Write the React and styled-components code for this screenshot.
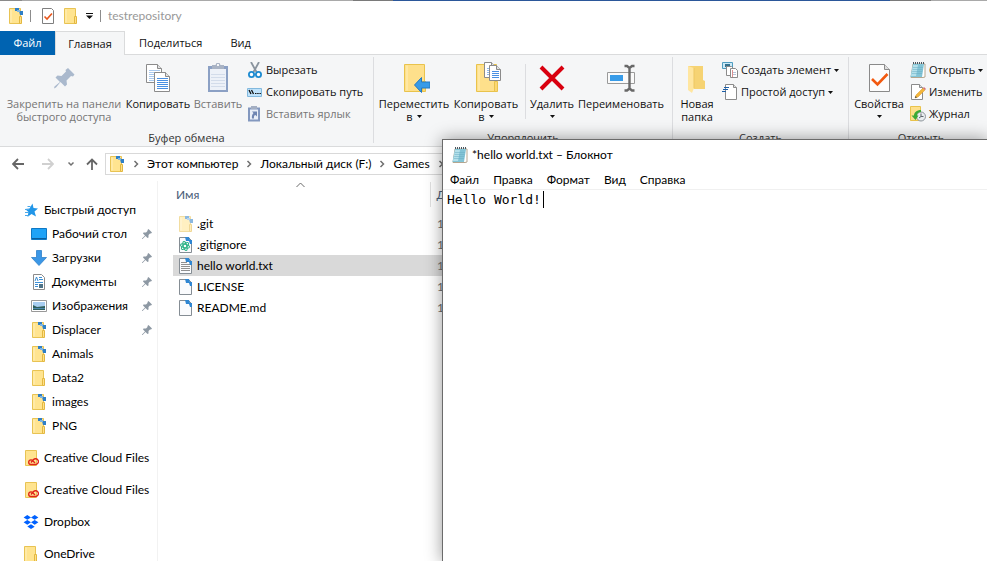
import React from 'react';
import styled, { createGlobalStyle, css } from 'styled-components';

const GlobalStyle = createGlobalStyle`
  * { box-sizing: border-box; }
  html, body, #root { height: 100%; }
  body {
    margin: 0;
    overflow: hidden;
    background: #fff;
    color: #000;
    font: 12px/16px Lato, "Noto Sans", sans-serif;
  }
  button {
    border: 0;
    padding: 0;
    background: none;
    color: inherit;
    font: inherit;
  }
  svg { display: block; flex: none; }
`;

const ribbonFont = css`
  font: 11px/16px "Open Sans", "Noto Sans", sans-serif;
`;

/* ---------- layout ---------- */

const Desktop = styled.div`
  position: relative;
  display: flex;
  flex-direction: column;
  min-height: 100vh;
  overflow: hidden;
`;

const TopEdge = styled.div`
  height: 1px;
  background: linear-gradient(
    90deg,
    #8a8a8a 0 2.2%, #a9a9a9 2.2% 35.8%, #7a7a7a 35.8% 39.8%,
    #2b579a 39.8% 90.2%, #7a7a7a 90.2% 94.3%, #a9a9a9 94.3%
  );
`;

const TitleBar = styled.header`
  display: flex;
  align-items: center;
  height: 30px;
  padding-left: 8px;
  color: #999;
`;

const TitleRule = styled.span`
  width: 1px;
  height: 12px;
  margin: ${(p) => p.$margin};
  background: #8c8c8c;
`;

const QuickButton = styled.button`
  display: grid;
  place-items: center;
  width: 16px;
  height: 18px;
  margin-right: ${(p) => p.$after || 0}px;
`;

const TabStrip = styled.nav`
  display: flex;
  height: 24px;
  border-bottom: 1px solid #dadbdc;
  ${ribbonFont}
`;

const Tab = styled.button`
  height: 24px;
  padding: 0 14px;
  color: #111;
  ${(p) => p.$kind === 'file' && css`
    width: 55px;
    padding: 0;
    background: #0063b1;
    color: #fff;
  `}
  ${(p) => p.$kind === 'active' && css`
    width: 70px;
    padding: 0;
    border: 1px solid #dadbdc;
    border-bottom: 0;
    background: #f5f6f7;
  `}
`;

const Ribbon = styled.section`
  display: flex;
  height: 92px;
  border-bottom: 1px solid #dadbdc;
  background: #f5f6f7;
  color: #111;
  ${ribbonFont}
`;

const Group = styled.div`
  display: flex;
  flex-direction: column;
  flex: 0 0 ${(p) => p.$width}px;
  min-width: 0;
  padding-top: 2px;
`;

const GroupBody = styled.div`
  display: flex;
  height: 73px;
  padding-left: ${(p) => p.$pad}px;
`;

const GroupLabel = styled.div`
  text-align: center;
  line-height: 16px;
  color: #333;
`;

const GroupRule = styled.span`
  flex: none;
  width: 1px;
  height: 86px;
  margin-top: 2px;
  background: #dcdde0;
`;

const InnerRule = styled.span`
  flex: none;
  width: 1px;
  height: 55px;
  margin: 7px 2px 0 4px;
  background: #dcdde0;
`;

const BigButton = styled.button`
  display: flex;
  flex-direction: column;
  align-items: center;
  flex: 0 0 ${(p) => p.$width}px;
  min-width: 0;
  padding-top: 5px;
  line-height: 13px;
  white-space: nowrap;
  color: ${(p) => (p.disabled ? '#757575' : 'inherit')};
`;

const BigLabel = styled.span`
  display: block;
  margin-top: 3px;
`;

const MenuLine = styled.span`
  display: flex;
  align-items: center;
  justify-content: center;
  gap: 4px;
  height: 13px;
`;

const SmallColumn = styled.div`
  display: flex;
  flex-direction: column;
  margin-left: ${(p) => p.$gap}px;
  padding-top: 2px;
`;

const SmallButton = styled.button`
  display: flex;
  align-items: center;
  gap: 3px;
  height: 22px;
  white-space: nowrap;
  color: ${(p) => (p.disabled ? '#757575' : 'inherit')};
`;

const NavBar = styled.nav`
  display: flex;
  align-items: center;
  height: 34px;
  padding-left: 10px;
`;

const NavButton = styled.button`
  display: grid;
  place-items: center;
  width: 16px;
  height: 22px;
  margin-right: ${(p) => p.$after}px;
`;

const AddressBox = styled.div`
  display: flex;
  flex: 1;
  align-items: center;
  height: 22px;
  padding-left: 3px;
  border: 1px solid #d9d9d9;
`;

const Crumb = styled.a`
  color: #000;
  text-decoration: none;
  white-space: nowrap;
`;

const CrumbArrow = styled.span`
  display: grid;
  place-items: center;
  width: 22px;
`;

const Content = styled.div`
  display: flex;
  flex: 1;
`;

const Sidebar = styled.aside`
  flex: 0 0 158px;
  height: 380px;
  padding-top: 17px;
  overflow: hidden;
  border-right: 1px solid #f2f2f2;
`;

const SideItem = styled.a`
  display: flex;
  align-items: center;
  height: 24px;
  margin-top: ${(p) => (p.$spaced ? 8 : 0)}px;
  padding: 0 4px 0 ${(p) => (p.$nested ? 31 : 23)}px;
  gap: 5px;
  color: #000;
  text-decoration: none;
  white-space: nowrap;
`;

const SideText = styled.span`
  flex: 1;
`;

const FilePane = styled.main`
  flex: 1;
  padding: 1px 0 0 15px;
`;

const FileTable = styled.table`
  width: 100%;
  border-collapse: collapse;
  table-layout: fixed;
`;

const HeadCell = styled.th`
  position: relative;
  width: ${(p) => p.$width || 'auto'};
  height: 25px;
  padding: 0 3px 0 ${(p) => p.$pad}px;
  border-right: ${(p) => (p.$width ? '1px solid #e0e0e0' : '0')};
  color: #4c607a;
  font-weight: 400;
  text-align: left;
`;

const SortMark = styled.span`
  position: absolute;
  top: 0;
  left: 50%;
  margin-left: -5px;
`;

const FileRows = styled.tbody`
  &::before {
    content: "";
    display: block;
    height: 6px;
  }
`;

const FileRow = styled.tr`
  height: 21px;
  background: ${(p) => (p.$selected ? '#d9d9d9' : 'transparent')};
`;

const FileCell = styled.td`
  height: 21px;
  padding: 0 0 0 ${(p) => p.$pad}px;
  color: ${(p) => (p.$muted ? '#6d6d6d' : '#000')};
`;

const FileName = styled.div`
  display: flex;
  align-items: center;
  gap: 3px;
  height: 21px;
`;

/* ---------- Notepad window ---------- */

const NotepadWindow = styled.section`
  position: absolute;
  top: 139px;
  left: 442px;
  right: -1px;
  bottom: -1px;
  display: flex;
  flex-direction: column;
  border: 1px solid #6b6b6b;
  background: #fff;
  box-shadow: 0 0 16px rgba(0, 0, 0, 0.4);
`;

const NotepadTitle = styled.header`
  display: flex;
  align-items: center;
  gap: 4px;
  height: 30px;
  padding-left: 9px;
`;

const NotepadMenu = styled.nav`
  display: flex;
  align-items: center;
  gap: 14px;
  height: 20px;
  padding-left: 7px;
  border-bottom: 1px solid #f0f0f0;
`;

const Editor = styled.div`
  display: grid;
  flex: 1;
  padding: 1px 0 0 4px;
  font: 13px/17px "DejaVu Sans Mono", monospace;
  & > * { grid-area: 1 / 1; }
`;

const EditorText = styled.textarea`
  border: 0;
  padding: 0;
  outline: 0;
  resize: none;
  overflow: hidden;
  background: none;
  color: #000;
  font: inherit;
`;

const Caret = styled.span`
  width: 1px;
  height: 17px;
  margin-left: calc(12ch + 2px);
  background: #000;
`;

/* ---------- icons ---------- */

const Svg = ({ s = 16, w, h, children, ...rest }) => (
  <svg width={w || s} height={h || s} viewBox={`0 0 ${w || s} ${h || s}`} aria-hidden="true" {...rest}>
    {children}
  </svg>
);

const SyncMarks = () => (
  <g>
    <path d="M7 0h4v3h-4zM11 3h4v4h-3z" fill="#2f7fc6" />
    <path d="M9 2h3v2h-3z" fill="#7db4e2" />
  </g>
);

const FolderIcon = ({ sync, faded }) => (
  <Svg opacity={faded ? 0.55 : 1}>
    <path d="M1.500.5h11v15h-11z" fill="#ffe490" stroke="#e8c353" />
    <path d="M3 1.500v13" stroke="#fff0bd" />
    <path d="M11.500 8.500h2v7h-2z" fill="#ffe08a" stroke="#e3b840" />
    {sync && <SyncMarks />}
  </Svg>
);

const SheetIcon = ({ kind }) => (
  <Svg>
    <path d="M1.500.5h9l3 3v12h-12z" fill="#fafbfd" stroke="#858d94" />
    {kind === 'text' && <path d="M3 4.500h6M3 6.500h9M3 8.500h9M3 10.500h9M3 12.500h9" stroke="#909090" />}
    {kind === 'atom' && (
      <g fill="none" stroke="#27b184" strokeWidth="1">
        <ellipse cx="7" cy="9" rx="4.600" ry="1.800" transform="rotate(15 7 9)" />
        <ellipse cx="7" cy="9" rx="4.600" ry="1.800" transform="rotate(75 7 9)" />
        <ellipse cx="7" cy="9" rx="4.600" ry="1.800" transform="rotate(135 7 9)" />
      </g>
    )}
    <path d="M7 0h4l1 3h2v4h-2l-1-3h-3z" fill="#2f86d2" />
  </Svg>
);

const CheckSheet = ({ small }) =>
  small ? (
    <Svg>
      <path d="M2.500.5h9l2 2v13h-11z" fill="#fff" stroke="#7f7f7f" />
      <path d="M4.500 8.500l2.500 2.500 5-5.500" fill="none" stroke="#e8561c" strokeWidth="1.600" />
    </Svg>
  ) : (
    <Svg s={32}>
      <path d="M6.500 2.500h15l5 5v22h-20z" fill="#fcfcfc" stroke="#8a8a8a" />
      <path d="M21.500 2.500v5h5" fill="#dedede" stroke="#8a8a8a" />
      <path d="M9 17l5.500 5.500L24.500 12" fill="none" stroke="#f2590f" strokeWidth="2.600" />
    </Svg>
  );

const Triangle = () => (
  <Svg w={5} h={3}>
    <path d="M0 0h5L2.500 3z" fill="#111" />
  </Svg>
);

const CustomizeIcon = () => (
  <Svg w={7} h={6}>
    <path d="M0 .5h7" stroke="#111" />
    <path d="M0 2.500h7L3.500 6z" fill="#111" />
  </Svg>
);

const PinBig = () => (
  <Svg s={32}>
    <path d="M20 6l6.500 6.500-1.500 2-2-.5-4.500 4.500.5 4-2 2-4.500-4.500-4.500 5.500L6 26.500l.5-2 5.500-4.500-4.500-4.500 2-2 4 .5 4.500-4.500-.5-1.500z" fill="#aab9cd" />
  </Svg>
);

const PinSmall = () => (
  <Svg w={12} h={12}>
    <path d="M7.500 1L11 4.500l-1 1h-1L7.500 7v2.500l-1 .5-2-2L1.500 11H1v-.5L4 7.500l-2-2 .5-1H5L6.500 3V2z" fill="#8d98a3" />
  </Svg>
);

const Page = ({ x, y, w, h, color = '#4a90e2' }) => {
  const lines = [];
  for (let i = 6; i < h - 2; i += 2) lines.push(`M${x + 3} ${y + i + 0.5}h${w - 5}`);
  return (
    <g>
      <path d={`M${x + 0.5} ${y + 0.5}h${w - 5}l4 4v${h - 5}h-${w - 1}z`} fill="#fff" stroke="#8b8b8b" />
      <path d={`M${x + w - 4.5} ${y + 0.5}v4h4`} fill="#e2e2e2" stroke="#8b8b8b" />
      <path d={lines.join('')} stroke={color} />
    </g>
  );
};

const CopyBig = () => (
  <Svg s={32}>
    <Page x={4} y={2} w={16} h={19} color="#a9c9ee" />
    <Page x={12} y={10} w={16} h={20} />
  </Svg>
);

const PasteBig = () => (
  <Svg s={32}>
    <path d="M6 4h20v26H6z" fill="#8ba0c4" />
    <path d="M8 7h16v21H8z" fill="#edf1f8" />
    <path d="M9 12.500h14M9 15.500h14M9 18.500h14M9 21.500h14M9 24.500h14" stroke="#d3dcea" />
    <path d="M10 3h3.500l1-2h3l1 2H22v4H10z" fill="#a9b3c4" />
    <path d="M15 2h2v2h-2z" fill="#f5f6f7" />
  </Svg>
);

const FolderShape = () => (
  <g>
    <path d="M6.500 2.500h20v27h-20z" fill="#fee08b" stroke="#e9c34c" />
    <path d="M9 3.500v25" stroke="#fff0bd" />
    <path d="M24.500 19.500h3v10h-3z" fill="#fbd774" stroke="#e9c34c" />
  </g>
);

const MoveBig = () => (
  <Svg s={32}>
    <FolderShape />
    <path d="M16.500 23l7-7.500v4.500h8.500v6h-8.500v4.500z" fill="#379be8" stroke="#2278c2" />
  </Svg>
);

const CopyToBig = () => (
  <Svg s={32}>
    <FolderShape />
    <Page x={14} y={0} w={12} h={16} color="#8fb9ec" />
    <Page x={19} y={3} w={12} h={16} />
  </Svg>
);

const DeleteBig = () => (
  <Svg s={32}>
    <path d="M5 5l22 22M27 5L5 27" stroke="#d9000f" strokeWidth="4" />
  </Svg>
);

const RenameBig = () => (
  <Svg s={32}>
    <path d="M2.500 10.500h27v11h-27z" fill="#fafafa" stroke="#9a9a9a" />
    <path d="M5 13h13v6H5z" fill="#379be8" />
    <path d="M19.500 4h2.500l2.500 2 2.500-2h2.500M24.500 5.500v21M19.500 28.500h2.500l2.500-2 2.500 2h2.500" fill="none" stroke="#686868" strokeWidth="2.400" />
  </Svg>
);

const NewFolderBig = () => (
  <Svg s={32}>
    <path d="M7 4h15v14l2 1v8H10z" fill="#f6d373" />
    <path d="M7 4l6 2v20l-2 5-4-3z" fill="#ffe6a0" />
    <path d="M13 6v20" stroke="#edc862" />
  </Svg>
);

const CutIcon = () => (
  <Svg>
    <path d="M4 0l5.500 10M12 0L6.500 10" stroke="#8a949e" strokeWidth="1.800" />
    <circle cx="4.500" cy="12.500" r="2.600" fill="#fff" stroke="#1d8bd1" strokeWidth="1.800" />
    <circle cx="11.500" cy="12.500" r="2.600" fill="#fff" stroke="#1d8bd1" strokeWidth="1.800" />
  </Svg>
);

const PathIcon = () => (
  <Svg>
    <path d="M.5 4.500h14v8H.5z" fill="#bfe2fa" stroke="#82b9de" />
    <path d="M2 6l2 4M4.500 6l2 4" stroke="#111" strokeWidth="1.300" />
    <path d="M8 9.500h1.500M10.200 9.500h1.500M12.400 9.500h1.500" stroke="#111" />
  </Svg>
);

const PasteLinkIcon = () => (
  <Svg>
    <path d="M1 1.500h12v14H1z" fill="#8398bf" />
    <path d="M3 3.500h8v10H3z" fill="#eaf0f8" />
    <path d="M4 0h6v3H4z" fill="#a4afc2" />
    <path d="M5 5.500h5v5L8.500 9C7 9.500 6.800 10.500 7 12.500H5C4.600 10 5.200 8.500 6.500 7z" fill="#6f86b2" />
  </Svg>
);

const NewItemIcon = () => (
  <Svg>
    <path d="M.500.5h10v6H.5z" fill="#cdeaf7" stroke="#4e9cc0" />
    <path d="M3 2h5v3H3z" fill="#35718f" />
    <path d="M4.500 4.500h5l2 2v7h-7z" fill="#fff" stroke="#8b8b8b" />
    <path d="M8.500 6.500h5l2 2v7h-7z" fill="#fff" stroke="#8b8b8b" />
    <path d="M10 10.500h4M10 12.500h4" stroke="#b5c3d6" />
    <path d="M10.500 8v7" stroke="#dd8f8f" />
  </Svg>
);

const EasyAccessIcon = () => (
  <Svg>
    <path d="M3.500.5h8l3 3v12h-11z" fill="#fff" stroke="#8b8b8b" />
    <path d="M11.500.5v3h3" fill="#e2e2e2" stroke="#8b8b8b" />
    <path d="M2 3.500h5M1 5.500h5M0 7.500h4" stroke="#1d5fa8" />
  </Svg>
);

const NotepadIcon = () => (
  <Svg>
    <path d="M3 2h12v13l-2 .5H1z" fill="#fff" stroke="#b5a68f" />
    <path d="M3 2h11l-2 13H.5z" fill="#83c4d6" />
    <path d="M3 3h5L6 14H1z" fill="#b4e0ea" />
    <path d="M3 5.500h10M2.500 7.500h10M2.200 9.500h10M2 11.500h10" stroke="#68adc2" strokeWidth=".5" />
    <path d="M3 1h12" stroke="#4a5660" strokeWidth="2" strokeDasharray="1 1" />
  </Svg>
);

const EditIcon = () => (
  <Svg>
    <path d="M1.500.5h8l3 3v12h-11z" fill="#fff" stroke="#8b8b8b" />
    <path d="M9.500.5v3h3" fill="#e2e2e2" stroke="#8b8b8b" />
    <path d="M5 14l1-3 7-7 2 2-7 7z" fill="#f3b63a" stroke="#d8972a" strokeWidth=".5" />
    <path d="M13 4l1-1 2 2-1 1z" fill="#d46f7d" />
    <path d="M5 14l.5-2 1.500 1.500z" fill="#444" />
  </Svg>
);

const HistoryIcon = () => (
  <Svg>
    <path d="M.500.5h10v14h-10z" fill="#fee08b" stroke="#e9c34c" />
    <circle cx="11" cy="10.500" r="4.500" fill="#e9edf0" stroke="#8d959c" />
    <path d="M11 7.500v3l-2 1.500M11 10.500h2.500" fill="none" stroke="#5e666d" />
    <path d="M11 4C6.500 4 4 6.500 4 9.500H1.500L5.500 14l3-4.500H7C7 7.500 8.500 6 11 6z" fill="#3caa36" />
  </Svg>
);

const Arrow = ({ dir, color }) => (
  <Svg w={12} h={12}>
    <g fill="none" stroke={color} strokeWidth="1.800">
      {dir === 'left' && <path d="M12 6H1.500M6 1L1 6l5 5" />}
      {dir === 'right' && <path d="M0 6h10.500M6 1l5 5-5 5" />}
      {dir === 'up' && <path d="M6 12V1.500M1 6.500l5-5 5 5" />}
    </g>
  </Svg>
);

const Chevron = ({ dir }) => (
  <Svg w={8} h={8}>
    <path
      d={dir === 'down' ? 'M1.500 2.500L4 5l2.500-2.500' : 'M2.500 1L5.500 4l-3 3'}
      fill="none"
      stroke="#707070"
      strokeWidth="1.500"
    />
  </Svg>
);

const SortUp = () => (
  <Svg w={9} h={6}>
    <path d="M.500 5l4-4 4 4" fill="none" stroke="#6a6a6a" />
  </Svg>
);

const StarIcon = () => (
  <Svg>
    <path d="M9.500 1.500l1 4.500 4.500.5-3.500 3 1.500 5-4.500-2.500L4.500 15l1-5L2 7l4.500-.5z" fill="#2196e8" />
    <path d="M4.500 4.500h3M2 7.500h4M2 10.500h4M2 13.500h4" stroke="#4aa8ea" />
  </Svg>
);

const DesktopIcon = () => (
  <Svg>
    <path d="M.500 2.500h15v11H.500z" fill="#1fa3f7" stroke="#0f78c4" />
    <path d="M1 12.500h14" stroke="#0a5d9c" />
  </Svg>
);

const DownloadIcon = () => (
  <Svg>
    <path d="M5.500.5h5v7h5L8 15.500.500 7.500h5z" fill="#3b97e6" stroke="#2f80c9" strokeWidth=".8" />
  </Svg>
);

const DocumentsIcon = () => (
  <Svg>
    <path d="M2.500.5h8l3 3v12h-11z" fill="#fff" stroke="#8b8b8b" />
    <path d="M4 7l1.500-4L7 7M8 3.500h3M8 5.500h4M4 8.500h8M4 10.500h3M4 12.500h3" fill="none" stroke="#3d8fd4" />
    <path d="M8 10h4v4H8z" fill="#4e7286" />
  </Svg>
);

const PicturesIcon = () => (
  <Svg>
    <path d="M.500 2.500h15v11H.500z" fill="#fff" stroke="#999" />
    <path d="M2 4h12v8H2z" fill="#a8cdf0" />
    <path d="M2 7l4 2 8-1v4H2z" fill="#2e5e5b" />
    <path d="M2 10.500h12" stroke="#4d87ad" />
  </Svg>
);

const CreativeIcon = () => (
  <Svg>
    <path d="M2.500.5h11v15h-11z" fill="#ffe490" stroke="#e8c353" />
    <g fill="none" stroke="#e02419" strokeWidth="1.400">
      <path d="M11 14.500H8a2.300 2.300 0 0 1 0-4.600c1 0 1.500.5 2 1l2 2" />
      <path d="M8 12.500l2.500-3a2.900 2.900 0 1 1 2 5H11" />
    </g>
  </Svg>
);

const DropboxIcon = () => (
  <Svg>
    <path
      d="M4.300 1l3.700 2.400-3.700 2.400L.6 3.400zM11.700 1l3.700 2.400-3.700 2.400L8 3.400zM4.300 5.900L8 8.300l-3.700 2.400L.6 8.300zM11.700 5.900l3.700 2.400-3.700 2.400L8 8.300zM8 10.300l3.700 2.400L8 15l-3.700-2.400z"
      fill="#0061fe"
    />
  </Svg>
);

/* ---------- data ---------- */

const sideItems = [
  { text: 'Быстрый доступ', icon: <StarIcon /> },
  { text: 'Рабочий стол', icon: <DesktopIcon />, nested: true, pinned: true },
  { text: 'Загрузки', icon: <DownloadIcon />, nested: true, pinned: true },
  { text: 'Документы', icon: <DocumentsIcon />, nested: true, pinned: true },
  { text: 'Изображения', icon: <PicturesIcon />, nested: true, pinned: true },
  { text: 'Displacer', icon: <FolderIcon sync />, nested: true, pinned: true },
  { text: 'Animals', icon: <FolderIcon sync />, nested: true },
  { text: 'Data2', icon: <FolderIcon />, nested: true },
  { text: 'images', icon: <FolderIcon sync />, nested: true },
  { text: 'PNG', icon: <FolderIcon sync />, nested: true },
  { text: 'Creative Cloud Files', icon: <CreativeIcon />, spaced: true },
  { text: 'Creative Cloud Files', icon: <CreativeIcon />, spaced: true },
  { text: 'Dropbox', icon: <DropboxIcon />, spaced: true },
  { text: 'OneDrive', icon: <FolderIcon />, spaced: true },
];

const files = [
  { name: '.git', icon: <FolderIcon sync faded /> },
  { name: '.gitignore', icon: <SheetIcon kind="atom" /> },
  { name: 'hello world.txt', icon: <SheetIcon kind="text" />, selected: true },
  { name: 'LICENSE', icon: <SheetIcon /> },
  { name: 'README.md', icon: <SheetIcon /> },
];

const Big = ({ icon, width, lines, menu, menuText, disabled }) => (
  <BigButton $width={width} disabled={disabled}>
    {icon}
    <BigLabel>
      {lines.map((line, i) => (
        <React.Fragment key={line}>
          {i > 0 && <br />}
          {line}
        </React.Fragment>
      ))}
    </BigLabel>
    {menu && <MenuLine>{menuText}<Triangle /></MenuLine>}
  </BigButton>
);

const Small = ({ icon, text, menu, disabled }) => (
  <SmallButton disabled={disabled}>
    {icon}
    <span>{text}</span>
    {menu && <Triangle />}
  </SmallButton>
);

const Explorer = () => (
  <>
    <TopEdge />
    <TitleBar>
      <FolderIcon sync />
      <TitleRule $margin="0 9px 0 6px" />
      <QuickButton $after={7} aria-label="Свойства"><CheckSheet small /></QuickButton>
      <QuickButton $after={2} aria-label="Новая папка"><FolderIcon /></QuickButton>
      <QuickButton aria-label="Настройка панели"><CustomizeIcon /></QuickButton>
      <TitleRule $margin="0 7px 0 3px" />
      <span>testrepository</span>
    </TitleBar>
    <TabStrip>
      <Tab $kind="file">Файл</Tab>
      <Tab $kind="active">Главная</Tab>
      <Tab>Поделиться</Tab>
      <Tab>Вид</Tab>
    </TabStrip>
    <Ribbon>
      <Group $width={373}>
        <GroupBody $pad={4}>
          <Big icon={<PinBig />} width={120} lines={['Закрепить на панели', 'быстрого доступа']} disabled />
          <Big icon={<CopyBig />} width={68} lines={['Копировать']} />
          <Big icon={<PasteBig />} width={52} lines={['Вставить']} disabled />
          <SmallColumn $gap={3}>
            <Small icon={<CutIcon />} text="Вырезать" />
            <Small icon={<PathIcon />} text="Скопировать путь" />
            <Small icon={<PasteLinkIcon />} text="Вставить ярлык" disabled />
          </SmallColumn>
        </GroupBody>
        <GroupLabel>Буфер обмена</GroupLabel>
      </Group>
      <GroupRule />
      <Group $width={298}>
        <GroupBody $pad={3}>
          <Big icon={<MoveBig />} width={74} lines={['Переместить']} menu menuText="в" />
          <Big icon={<CopyToBig />} width={70} lines={['Копировать']} menu menuText="в" />
          <InnerRule />
          <Big icon={<DeleteBig />} width={48} lines={['Удалить']} menu />
          <Big icon={<RenameBig />} width={90} lines={['Переименовать']} />
        </GroupBody>
        <GroupLabel>Упорядочить</GroupLabel>
      </Group>
      <GroupRule />
      <Group $width={175}>
        <GroupBody $pad={4}>
          <Big icon={<NewFolderBig />} width={40} lines={['Новая', 'папка']} />
          <SmallColumn $gap={5}>
            <Small icon={<NewItemIcon />} text="Создать элемент" menu />
            <Small icon={<EasyAccessIcon />} text="Простой доступ" menu />
          </SmallColumn>
        </GroupBody>
        <GroupLabel>Создать</GroupLabel>
      </Group>
      <GroupRule />
      <Group $width={144}>
        <GroupBody $pad={4}>
          <Big icon={<CheckSheet />} width={52} lines={['Свойства']} menu />
          <SmallColumn $gap={5}>
            <Small icon={<NotepadIcon />} text="Открыть" menu />
            <Small icon={<EditIcon />} text="Изменить" />
            <Small icon={<HistoryIcon />} text="Журнал" />
          </SmallColumn>
        </GroupBody>
        <GroupLabel>Открыть</GroupLabel>
      </Group>
    </Ribbon>
    <NavBar>
      <NavButton $after={14} aria-label="Назад"><Arrow dir="left" color="#666" /></NavButton>
      <NavButton $after={7} aria-label="Вперёд"><Arrow dir="right" color="#d0d0d0" /></NavButton>
      <NavButton $after={5} aria-label="Недавние"><Chevron dir="down" /></NavButton>
      <NavButton $after={5} aria-label="Вверх"><Arrow dir="up" color="#666" /></NavButton>
      <AddressBox>
        <FolderIcon sync />
        <CrumbArrow><Chevron /></CrumbArrow>
        <Crumb href="#">Этот компьютер</Crumb>
        <CrumbArrow><Chevron /></CrumbArrow>
        <Crumb href="#">Локальный диск (F:)</Crumb>
        <CrumbArrow><Chevron /></CrumbArrow>
        <Crumb href="#">Games</Crumb>
        <CrumbArrow><Chevron /></CrumbArrow>
      </AddressBox>
    </NavBar>
    <Content>
      <Sidebar>
        {sideItems.map((item, i) => (
          <SideItem key={i} href="#" $nested={item.nested} $spaced={item.spaced}>
            {item.icon}
            <SideText>{item.text}</SideText>
            {item.pinned && <PinSmall />}
          </SideItem>
        ))}
      </Sidebar>
      <FilePane>
        <FileTable>
          <thead>
            <tr>
              <HeadCell $width="257px" $pad={3}>
                Имя
                <SortMark><SortUp /></SortMark>
              </HeadCell>
              <HeadCell $pad={6}>Д</HeadCell>
            </tr>
          </thead>
          <FileRows>
            {files.map((file) => (
              <FileRow key={file.name} $selected={file.selected}>
                <FileCell $pad={5}>
                  <FileName>{file.icon}{file.name}</FileName>
                </FileCell>
                <FileCell $pad={7} $muted>1</FileCell>
              </FileRow>
            ))}
          </FileRows>
        </FileTable>
      </FilePane>
    </Content>
  </>
);

const Notepad = () => (
  <NotepadWindow>
    <NotepadTitle>
      <NotepadIcon />
      <span>*hello world.txt – Блокнот</span>
    </NotepadTitle>
    <NotepadMenu>
      <button>Файл</button>
      <button>Правка</button>
      <button>Формат</button>
      <button>Вид</button>
      <button>Справка</button>
    </NotepadMenu>
    <Editor>
      <EditorText aria-label="Текст" spellCheck={false} defaultValue="Hello World!" />
      <Caret />
    </Editor>
  </NotepadWindow>
);

export default function App() {
  return (
    <Desktop>
      <GlobalStyle />
      <Explorer />
      <Notepad />
    </Desktop>
  );
}
